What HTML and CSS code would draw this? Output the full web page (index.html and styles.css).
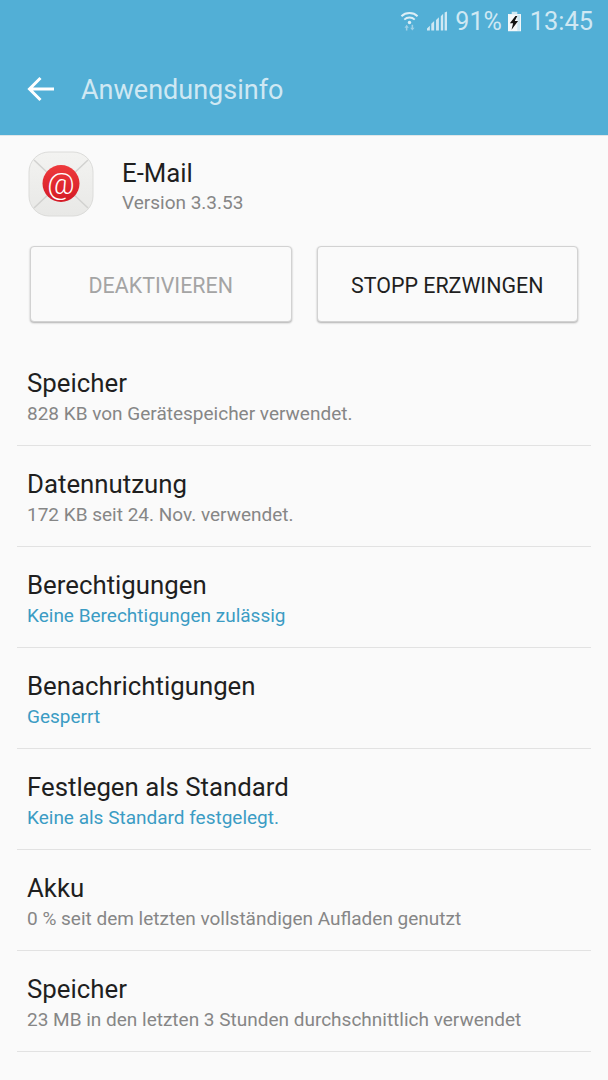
FILE: index.html
```html
<!DOCTYPE html>
<html lang="de">
<head>
<meta charset="utf-8">
<title>Anwendungsinfo</title>
<link rel="stylesheet" href="styles.css">
</head>
<body>
<header class="appbar">
  <div class="status">
    <svg class="ic-wifi" width="19" height="22" viewBox="0 0 20 22">
      <g fill="none" stroke="#dceef6" stroke-width="2">
        <path d="M1.500 6C6 1.500 14 1.500 18.500 6"/>
        <path d="M4.500 9.500C7.500 6.600 12.500 6.600 15.500 9.500"/>
      </g>
      <circle cx="10" cy="12.500" r="1.800" fill="#dceef6"/>
      <path d="M7 15l-2.300 3h1.500v3h1.600v-3h1.500zM13 21l2.300-3h-1.500v-3h-1.600v3h-1.500z" fill="#9fd0e6"/>
    </svg>
    <svg class="ic-signal" width="20" height="20" viewBox="0 0 21 20">
      <path d="M0 20v-2l3-3v5zM4.500 20v-7l3-3v10zM9.500 20V9l3-3v14z" fill="#cfe8f3"/>
      <path d="M14.500 20V5l2.500-2.500V20zM18.500 20V1L21 0v20z" fill="#cfe8f3"/>
    </svg>
    <span class="pct">91%</span>
    <svg class="ic-batt" width="13" height="21" viewBox="0 0 14 21">
      <path d="M4 0h6v2.500H4z" fill="#cfe8f3"/>
      <path d="M0 2.500h14V21H0z" fill="#f4f8fa"/>
      <path d="M10 3.500h3v17h-3z" fill="#cfe8f3"/>
      <path d="M8 4.500L2 12.500h3.500L3.800 19.500l7-9.500H7.300L10 4.500z" fill="#111"/>
    </svg>
    <span class="time">13:45</span>
  </div>
  <div class="titlebar">
    <svg class="ic-back" width="28" height="26" viewBox="0 0 28 26">
      <path d="M27 13H3M13.500 2L2.500 13l11 11" fill="none" stroke="#fff" stroke-width="3"/>
    </svg>
    <h1 class="title">Anwendungsinfo</h1>
  </div>
</header>
<main class="content">
  <section class="app">
    <svg class="app-icon" width="66" height="66" viewBox="0 0 66 66">
      <defs>
        <linearGradient id="envelope" x1="0" y1="0" x2="0" y2="1">
          <stop offset="0" stop-color="#f3f3f1"/>
          <stop offset="1" stop-color="#e8e8e6"/>
        </linearGradient>
        <linearGradient id="seal" x1="0" y1="0" x2="0" y2="1">
          <stop offset="0" stop-color="#ee3a3c"/>
          <stop offset="1" stop-color="#d41a26"/>
        </linearGradient>
      </defs>
      <rect x="1" y="1" width="64" height="64" rx="20" fill="url(#envelope)" stroke="#dcdcda"/>
      <path d="M6 9l18 17M60 9L42 26M6 57l18-17M60 57L42 40" stroke="#d2d2d0" stroke-width="1.500"/>
      <circle cx="33" cy="32.500" r="18.500" fill="url(#seal)"/>
      <text class="at" x="33" y="42.500" text-anchor="middle">@</text>
    </svg>
    <div class="app-text">
      <div class="app-name">E-Mail</div>
      <div class="app-ver">Version 3.3.53</div>
    </div>
  </section>
  <div class="buttons">
    <button class="btn btn-off">DEAKTIVIEREN</button>
    <button class="btn">STOPP ERZWINGEN</button>
  </div>
  <ul class="list">
    <li class="row"><div class="row-title">Speicher</div><div class="row-sub">828 KB von Gerätespeicher verwendet.</div></li>
    <li class="row"><div class="row-title">Datennutzung</div><div class="row-sub">172 KB seit 24. Nov. verwendet.</div></li>
    <li class="row"><div class="row-title">Berechtigungen</div><div class="row-sub accent">Keine Berechtigungen zulässig</div></li>
    <li class="row"><div class="row-title">Benachrichtigungen</div><div class="row-sub accent">Gesperrt</div></li>
    <li class="row"><div class="row-title">Festlegen als Standard</div><div class="row-sub accent">Keine als Standard festgelegt.</div></li>
    <li class="row"><div class="row-title">Akku</div><div class="row-sub">0 % seit dem letzten vollständigen Aufladen genutzt</div></li>
    <li class="row"><div class="row-title">Speicher</div><div class="row-sub">23 MB in den letzten 3 Stunden durchschnittlich verwendet</div></li>
  </ul>
</main>
</body>
</html>
```
FILE: styles.css
```css
* { box-sizing: border-box; }
html, body { margin: 0; padding: 0; }
body {
  width: 608px;
  height: 1080px;
  overflow: hidden;
  background: #fafafa;
  font-family: Roboto, "Liberation Sans", sans-serif;
}
.appbar {
  height: 136px;
  background: #52afd6;
  border-bottom: 1px solid #e0e6e8;
}
.status {
  height: 40px;
  padding: 2px 15px 0 0;
  display: flex;
  justify-content: flex-end;
  align-items: center;
  color: #cfe8f3;
  font-size: 25.4px;
}
.ic-wifi { margin-right: 8px; }
.ic-signal { margin-right: 8px; }
.pct { font-size: 25px; }
.ic-batt { margin: 0 9px 0 6px; }
.titlebar {
  height: 95px;
  padding: 4px 0 0 27px;
  display: flex;
  align-items: center;
}
.ic-back { margin: 0 0 2px 0; }
.title {
  margin: 0 0 0 26px;
  font-size: 27px;
  font-weight: 400;
  color: #cfe8f3;
}
.app {
  height: 97px;
  padding: 15px 0 0 28px;
  display: flex;
}
.app-icon { flex: none; }
.app-text { margin-left: 28px; }
.app-name {
  font-size: 25.8px;
  line-height: 30px;
  margin-top: 7px;
  color: #1f1f1f;
}
.app-ver {
  font-size: 19px;
  line-height: 24px;
  margin-top: 3px;
  color: #868686;
}
.buttons {
  display: flex;
  gap: 25px;
  padding: 0 30px;
  margin-top: 13px;
}
.btn {
  flex: 1;
  height: 76px;
  padding: 2px 0 0;
  background: #fafafa;
  border: 1px solid #d2d2d2;
  border-radius: 4px;
  box-shadow: 0 1px 2px rgba(0,0,0,.3);
  font-family: inherit;
  font-size: 21.4px;
  color: #1f1f1f;
}
.btn-off { color: #a4a4a4; }
.list {
  list-style: none;
  margin: 23px 0 0;
  padding: 0;
}
.row {
  height: 101px;
  margin: 0 17px;
  padding: 23px 0 0 10px;
  border-bottom: 1px solid #e2e2e2;
}
.row-title {
  font-size: 25.8px;
  line-height: 30px;
  color: #1f1f1f;
}
.row-sub {
  font-size: 19px;
  line-height: 24px;
  margin-top: 4px;
  color: #868686;
}
.accent { color: #3b9cc4; }
.at {
  font-family: Roboto, sans-serif;
  font-size: 30px;
  font-weight: 300;
  fill: #fff;
}
```
